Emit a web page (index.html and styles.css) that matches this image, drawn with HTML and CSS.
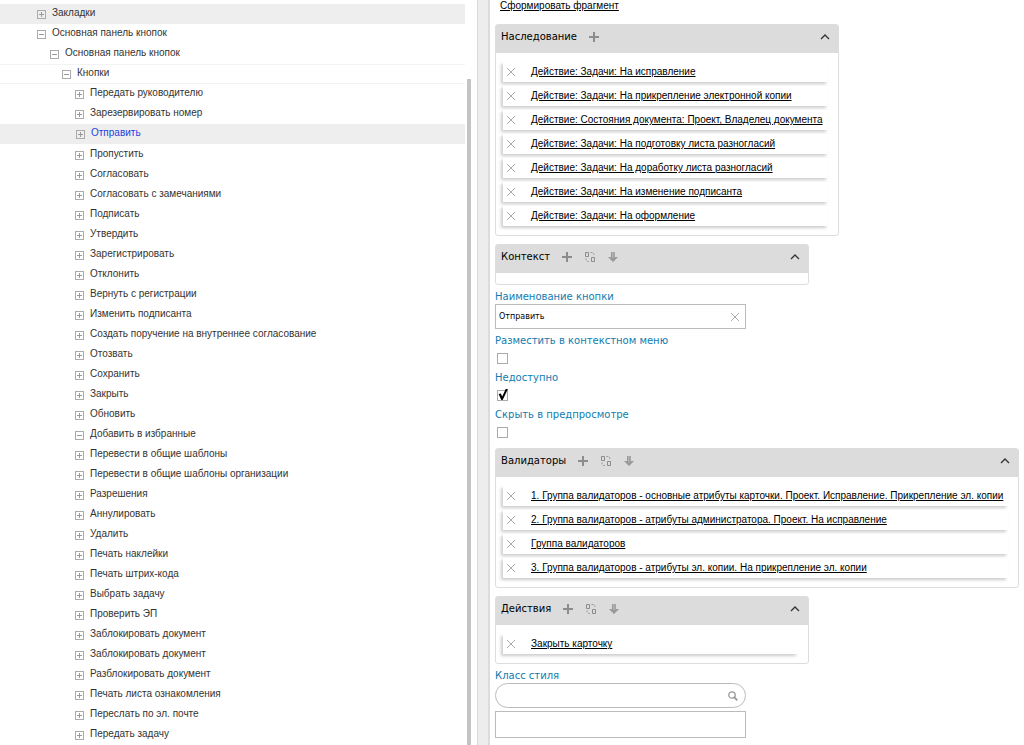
FILE: index.html
```
<!DOCTYPE html>
<html lang="ru">
<head>
  <meta charset="utf-8">
  <title>Отправить</title>
  <link rel="stylesheet" href="styles.css">
</head>
<body>
  <!-- Shared icons -->
  <svg class="sprite" width="0" height="0">
    <symbol id="icon-plus" viewBox="0 0 12 12">
      <path d="M6 1v10M1 6h10" fill="none" stroke="#8c8c8c" stroke-width="2"/>
    </symbol>
    <symbol id="icon-swap" viewBox="0 0 12 12">
      <path d="M1.5 1.5h3v4h-3zM7.500 6.500h3v4h-3z" fill="none" stroke="#8c8c8c"/>
      <path d="M6.500 1.500h2l1.500 1.500v1.500M2 7.500v1.500l1.500 1.500h2" fill="none" stroke="#999" stroke-dasharray="2 1"/>
    </symbol>
    <symbol id="icon-down" viewBox="0 0 12 12">
      <path d="M4 1h4v5h3L6 11 1 6h3z" fill="#999"/>
      <path d="M5.500 1v6M7 1v6" stroke="#c4c4c4" stroke-width=".6"/>
    </symbol>
    <symbol id="icon-up" viewBox="0 0 10 10">
      <path d="M1 7L5 3l4 4" fill="none" stroke="#333" stroke-width="1.300"/>
    </symbol>
    <symbol id="icon-cross" viewBox="0 0 10 10">
      <path d="M1 1l8 8M9 1L1 9" fill="none" stroke="#aaa"/>
    </symbol>
    <symbol id="icon-search" viewBox="0 0 10 10">
      <circle cx="4" cy="4" r="3.200" fill="none" stroke="#999" stroke-width="1.300"/>
      <path d="M6.200 6.200L9.300 9.300" stroke="#999" stroke-width="1.800"/>
    </symbol>
  </svg>

  <div class="layout">
    <nav class="tree-pane">
      <ul class="tree">
        <li class="row level-1 shaded"><button class="toggle plus" aria-label="Развернуть"></button><span>Закладки</span></li>
        <li class="row level-1"><button class="toggle" aria-label="Свернуть"></button><span>Основная панель кнопок</span></li>
        <li class="row level-2"><button class="toggle" aria-label="Свернуть"></button><span>Основная панель кнопок</span></li>
        <li class="row level-3 lined"><button class="toggle" aria-label="Свернуть"></button><span>Кнопки</span></li>
        <li class="row"><button class="toggle plus" aria-label="Развернуть"></button><span>Передать руководителю</span></li>
        <li class="row"><button class="toggle plus" aria-label="Развернуть"></button><span>Зарезервировать номер</span></li>
        <li class="row selected"><button class="toggle plus" aria-label="Развернуть"></button><span>Отправить</span></li>
        <li class="row"><button class="toggle plus" aria-label="Развернуть"></button><span>Пропустить</span></li>
        <li class="row"><button class="toggle plus" aria-label="Развернуть"></button><span>Согласовать</span></li>
        <li class="row"><button class="toggle plus" aria-label="Развернуть"></button><span>Согласовать с замечаниями</span></li>
        <li class="row"><button class="toggle plus" aria-label="Развернуть"></button><span>Подписать</span></li>
        <li class="row"><button class="toggle plus" aria-label="Развернуть"></button><span>Утвердить</span></li>
        <li class="row"><button class="toggle plus" aria-label="Развернуть"></button><span>Зарегистрировать</span></li>
        <li class="row"><button class="toggle plus" aria-label="Развернуть"></button><span>Отклонить</span></li>
        <li class="row"><button class="toggle plus" aria-label="Развернуть"></button><span>Вернуть с регистрации</span></li>
        <li class="row"><button class="toggle plus" aria-label="Развернуть"></button><span>Изменить подписанта</span></li>
        <li class="row"><button class="toggle plus" aria-label="Развернуть"></button><span>Создать поручение на внутреннее согласование</span></li>
        <li class="row"><button class="toggle plus" aria-label="Развернуть"></button><span>Отозвать</span></li>
        <li class="row"><button class="toggle plus" aria-label="Развернуть"></button><span>Сохранить</span></li>
        <li class="row"><button class="toggle plus" aria-label="Развернуть"></button><span>Закрыть</span></li>
        <li class="row"><button class="toggle plus" aria-label="Развернуть"></button><span>Обновить</span></li>
        <li class="row"><button class="toggle" aria-label="Свернуть"></button><span>Добавить в избранные</span></li>
        <li class="row"><button class="toggle plus" aria-label="Развернуть"></button><span>Перевести в общие шаблоны</span></li>
        <li class="row"><button class="toggle plus" aria-label="Развернуть"></button><span>Перевести в общие шаблоны организации</span></li>
        <li class="row"><button class="toggle plus" aria-label="Развернуть"></button><span>Разрешения</span></li>
        <li class="row"><button class="toggle plus" aria-label="Развернуть"></button><span>Аннулировать</span></li>
        <li class="row"><button class="toggle plus" aria-label="Развернуть"></button><span>Удалить</span></li>
        <li class="row"><button class="toggle plus" aria-label="Развернуть"></button><span>Печать наклейки</span></li>
        <li class="row"><button class="toggle plus" aria-label="Развернуть"></button><span>Печать штрих-кода</span></li>
        <li class="row"><button class="toggle plus" aria-label="Развернуть"></button><span>Выбрать задачу</span></li>
        <li class="row"><button class="toggle plus" aria-label="Развернуть"></button><span>Проверить ЭП</span></li>
        <li class="row"><button class="toggle plus" aria-label="Развернуть"></button><span>Заблокировать документ</span></li>
        <li class="row"><button class="toggle plus" aria-label="Развернуть"></button><span>Заблокировать документ</span></li>
        <li class="row"><button class="toggle plus" aria-label="Развернуть"></button><span>Разблокировать документ</span></li>
        <li class="row"><button class="toggle plus" aria-label="Развернуть"></button><span>Печать листа ознакомления</span></li>
        <li class="row"><button class="toggle plus" aria-label="Развернуть"></button><span>Переслать по эл. почте</span></li>
        <li class="row"><button class="toggle plus" aria-label="Развернуть"></button><span>Передать задачу</span></li>
      </ul>
      <div class="scroll-track"><div class="scroll-thumb"></div></div>
    </nav>

    <div class="splitter"></div>

    <main class="details">
      <a class="link" href="#">Сформировать фрагмент</a>

      <section class="panel">
        <header class="panel-header">
          <h2>Наследование</h2>
          <button class="icon-btn" aria-label="Добавить"><svg><use href="#icon-plus"/></svg></button>
          <button class="icon-btn collapse" aria-label="Свернуть"><svg><use href="#icon-up"/></svg></button>
        </header>
        <ul class="items">
          <li class="item"><button class="icon-btn remove" aria-label="Удалить"><svg><use href="#icon-cross"/></svg></button><a class="link" href="#">Действие: Задачи: На исправление</a></li>
          <li class="item"><button class="icon-btn remove" aria-label="Удалить"><svg><use href="#icon-cross"/></svg></button><a class="link" href="#">Действие: Задачи: На прикрепление электронной копии</a></li>
          <li class="item"><button class="icon-btn remove" aria-label="Удалить"><svg><use href="#icon-cross"/></svg></button><a class="link" href="#">Действие: Состояния документа: Проект, Владелец документа</a></li>
          <li class="item"><button class="icon-btn remove" aria-label="Удалить"><svg><use href="#icon-cross"/></svg></button><a class="link" href="#">Действие: Задачи: На подготовку листа разногласий</a></li>
          <li class="item"><button class="icon-btn remove" aria-label="Удалить"><svg><use href="#icon-cross"/></svg></button><a class="link" href="#">Действие: Задачи: На доработку листа разногласий</a></li>
          <li class="item"><button class="icon-btn remove" aria-label="Удалить"><svg><use href="#icon-cross"/></svg></button><a class="link" href="#">Действие: Задачи: На изменение подписанта</a></li>
          <li class="item"><button class="icon-btn remove" aria-label="Удалить"><svg><use href="#icon-cross"/></svg></button><a class="link" href="#">Действие: Задачи: На оформление</a></li>
        </ul>
      </section>

      <section class="panel">
        <header class="panel-header">
          <h2>Контекст</h2>
          <button class="icon-btn" aria-label="Добавить"><svg><use href="#icon-plus"/></svg></button>
          <button class="icon-btn" aria-label="Заменить"><svg><use href="#icon-swap"/></svg></button>
          <button class="icon-btn" aria-label="Вниз"><svg><use href="#icon-down"/></svg></button>
          <button class="icon-btn collapse" aria-label="Свернуть"><svg><use href="#icon-up"/></svg></button>
        </header>
        <div class="empty"></div>
      </section>

      <div class="field">
        <label for="button-name">Наименование кнопки</label>
        <div class="text-box">
          <input type="text" id="button-name" value="Отправить">
          <button class="icon-btn remove" aria-label="Очистить"><svg><use href="#icon-cross"/></svg></button>
        </div>
      </div>

      <div class="field check">
        <label for="in-menu">Разместить в контекстном меню</label>
        <input type="checkbox" id="in-menu">
      </div>
      <div class="field check">
        <label for="disabled">Недоступно</label>
        <input type="checkbox" id="disabled" checked>
      </div>
      <div class="field check">
        <label for="hide-preview">Скрыть в предпросмотре</label>
        <input type="checkbox" id="hide-preview">
      </div>

      <section class="panel">
        <header class="panel-header">
          <h2>Валидаторы</h2>
          <button class="icon-btn" aria-label="Добавить"><svg><use href="#icon-plus"/></svg></button>
          <button class="icon-btn" aria-label="Заменить"><svg><use href="#icon-swap"/></svg></button>
          <button class="icon-btn" aria-label="Вниз"><svg><use href="#icon-down"/></svg></button>
          <button class="icon-btn collapse" aria-label="Свернуть"><svg><use href="#icon-up"/></svg></button>
        </header>
        <ul class="items">
          <li class="item"><button class="icon-btn remove" aria-label="Удалить"><svg><use href="#icon-cross"/></svg></button><a class="link" href="#">1. Группа валидаторов - основные атрибуты карточки. Проект. Исправление. Прикрепление эл. копии</a></li>
          <li class="item"><button class="icon-btn remove" aria-label="Удалить"><svg><use href="#icon-cross"/></svg></button><a class="link" href="#">2. Группа валидаторов - атрибуты администратора. Проект. На исправление</a></li>
          <li class="item"><button class="icon-btn remove" aria-label="Удалить"><svg><use href="#icon-cross"/></svg></button><a class="link" href="#">Группа валидаторов</a></li>
          <li class="item"><button class="icon-btn remove" aria-label="Удалить"><svg><use href="#icon-cross"/></svg></button><a class="link" href="#">3. Группа валидаторов - атрибуты эл. копии. На прикрепление эл. копии</a></li>
        </ul>
      </section>

      <section class="panel">
        <header class="panel-header">
          <h2>Действия</h2>
          <button class="icon-btn" aria-label="Добавить"><svg><use href="#icon-plus"/></svg></button>
          <button class="icon-btn" aria-label="Заменить"><svg><use href="#icon-swap"/></svg></button>
          <button class="icon-btn" aria-label="Вниз"><svg><use href="#icon-down"/></svg></button>
          <button class="icon-btn collapse" aria-label="Свернуть"><svg><use href="#icon-up"/></svg></button>
        </header>
        <ul class="items">
          <li class="item"><button class="icon-btn remove" aria-label="Удалить"><svg><use href="#icon-cross"/></svg></button><a class="link" href="#">Закрыть карточку</a></li>
        </ul>
      </section>

      <div class="field">
        <label for="style-class">Класс стиля</label>
        <div class="text-box search">
          <input type="text" id="style-class">
          <button class="icon-btn remove" aria-label="Найти"><svg><use href="#icon-search"/></svg></button>
        </div>
        <textarea class="style-value" aria-label="Значение класса стиля"></textarea>
      </div>
    </main>
  </div>
</body>
</html>
```
FILE: styles.css
```
* {
  box-sizing: border-box;
}

body {
  margin: 0;
  font-family: "DejaVu Sans", Verdana, sans-serif;
  font-size: 10px;
  color: #111;
  background: #fff;
}

ul {
  list-style: none;
  margin: 0;
  padding: 0;
}

button {
  padding: 0;
  border: none;
  background: none;
  cursor: pointer;
}

.sprite {
  position: absolute;
}

.layout {
  display: flex;
  height: 100vh;
  overflow: hidden;
}

/* Tree */
.tree-pane {
  display: flex;
  flex: 0 0 46%;
  gap: 2px;
  font-family: "Liberation Sans", Arial, sans-serif;
}

.tree {
  flex: 1;
  padding-top: 4px;
}

.row {
  display: flex;
  align-items: center;
  gap: 6px;
  height: 20px;
  padding-left: 75px;
  line-height: 16px;
  color: #333;
  white-space: nowrap;
}

.row span {
  padding-bottom: 3px;
}

.row.level-1 {
  padding-left: 37px;
}

.row.level-2 {
  padding-left: 50px;
}

.row.level-3 {
  padding-left: 62px;
}

.row.shaded {
  background: #eee;
}

.row.lined {
  border-top: 1px solid #f3f3f3;
  border-bottom: 1px solid #f3f3f3;
}

.row.selected {
  margin-bottom: 1px;
  padding-left: 76px;
  background: #eee;
  color: #2244dd;
}

.toggle {
  width: 9px;
  height: 9px;
  border: 1px solid #aaa;
  background: linear-gradient(#999, #999) center / 5px 1px no-repeat;
}

.toggle.plus {
  background:
    linear-gradient(#999, #999) center / 5px 1px no-repeat,
    linear-gradient(#999, #999) center / 1px 5px no-repeat;
}

.scroll-track {
  width: 4px;
  padding-top: 79px;
}

.scroll-thumb {
  height: 100%;
  background: #c4c4c4;
}

.splitter {
  flex: 0 0 13px;
  margin-left: 6px;
  border-left: 1px solid #d8d8d8;
  border-right: 2px solid #dcdcdc;
  background: #ededed;
}

/* Details */
.details {
  display: flex;
  flex: 1;
  flex-direction: column;
  align-items: flex-start;
  min-width: 0;
  padding-left: 5px;
}

.link {
  font-family: "Liberation Sans", Arial, sans-serif;
  line-height: 12px;
  color: #000;
  text-decoration: underline;
  white-space: nowrap;
}

.details > .link {
  margin: 0 5px 8px;
}

.panel {
  flex: none;
  min-width: 314px;
  margin: 4px 0;
  border: 1px solid #ddd;
  border-radius: 3px;
}

.panel-header {
  display: flex;
  align-items: center;
  gap: 11px;
  height: 28px;
  padding: 0 8px 5px 5px;
  background: #dcdcdc;
}

.panel-header h2 {
  margin: 0;
  font-size: 10px;
  font-weight: normal;
  line-height: 16px;
  color: #000;
}

.icon-btn {
  width: 12px;
  height: 12px;
}

.icon-btn svg {
  display: block;
  width: 100%;
  height: 100%;
}

.icon-btn.collapse {
  width: 10px;
  height: 10px;
  margin-left: auto;
}

.icon-btn.remove {
  width: 10px;
  height: 10px;
}

.items {
  display: flex;
  flex-direction: column;
  gap: 4px;
  padding: 9px 10px 9px 7px;
}

.item {
  display: flex;
  align-items: center;
  gap: 15px;
  height: 20px;
  padding: 0 5px 0 3px;
  background: #fff;
  box-shadow: -2px 2px 3px #ccc;
}

.empty {
  height: 11px;
}

.field {
  display: flex;
  flex-direction: column;
  align-items: flex-start;
  margin-bottom: 4px;
}

.field label {
  font-size: 10px;
  line-height: 15px;
  color: #0f7cb0;
}

.text-box {
  display: flex;
  align-items: center;
  width: 251px;
  height: 25px;
  padding: 0 5px 0 3px;
  border: 1px solid #bbb;
}

.text-box input {
  flex: 1;
  min-width: 0;
  padding: 0;
  border: none;
  outline: none;
  background: none;
  font-family: inherit;
  font-size: 8px;
  color: #000;
}

.text-box.search {
  padding: 0 7px 0 12px;
  border-radius: 13px;
}

.check {
  gap: 5px;
  margin-bottom: 6px;
}

.check input {
  appearance: none;
  width: 11px;
  height: 11px;
  margin: 0 2px;
  border: 1px solid #aaa;
  background: #fff;
}

.check input:checked::after {
  content: "";
  display: block;
  width: 11px;
  height: 11px;
  margin: -2px 0 0;
  background: #000;
  clip-path: polygon(5% 45%, 25% 40%, 38% 68%, 70% 0, 90% 0, 42% 100%, 30% 100%);
}

.style-value {
  width: 251px;
  height: 27px;
  margin-top: 3px;
  border: 1px solid #bbb;
  outline: none;
  resize: none;
}
```
